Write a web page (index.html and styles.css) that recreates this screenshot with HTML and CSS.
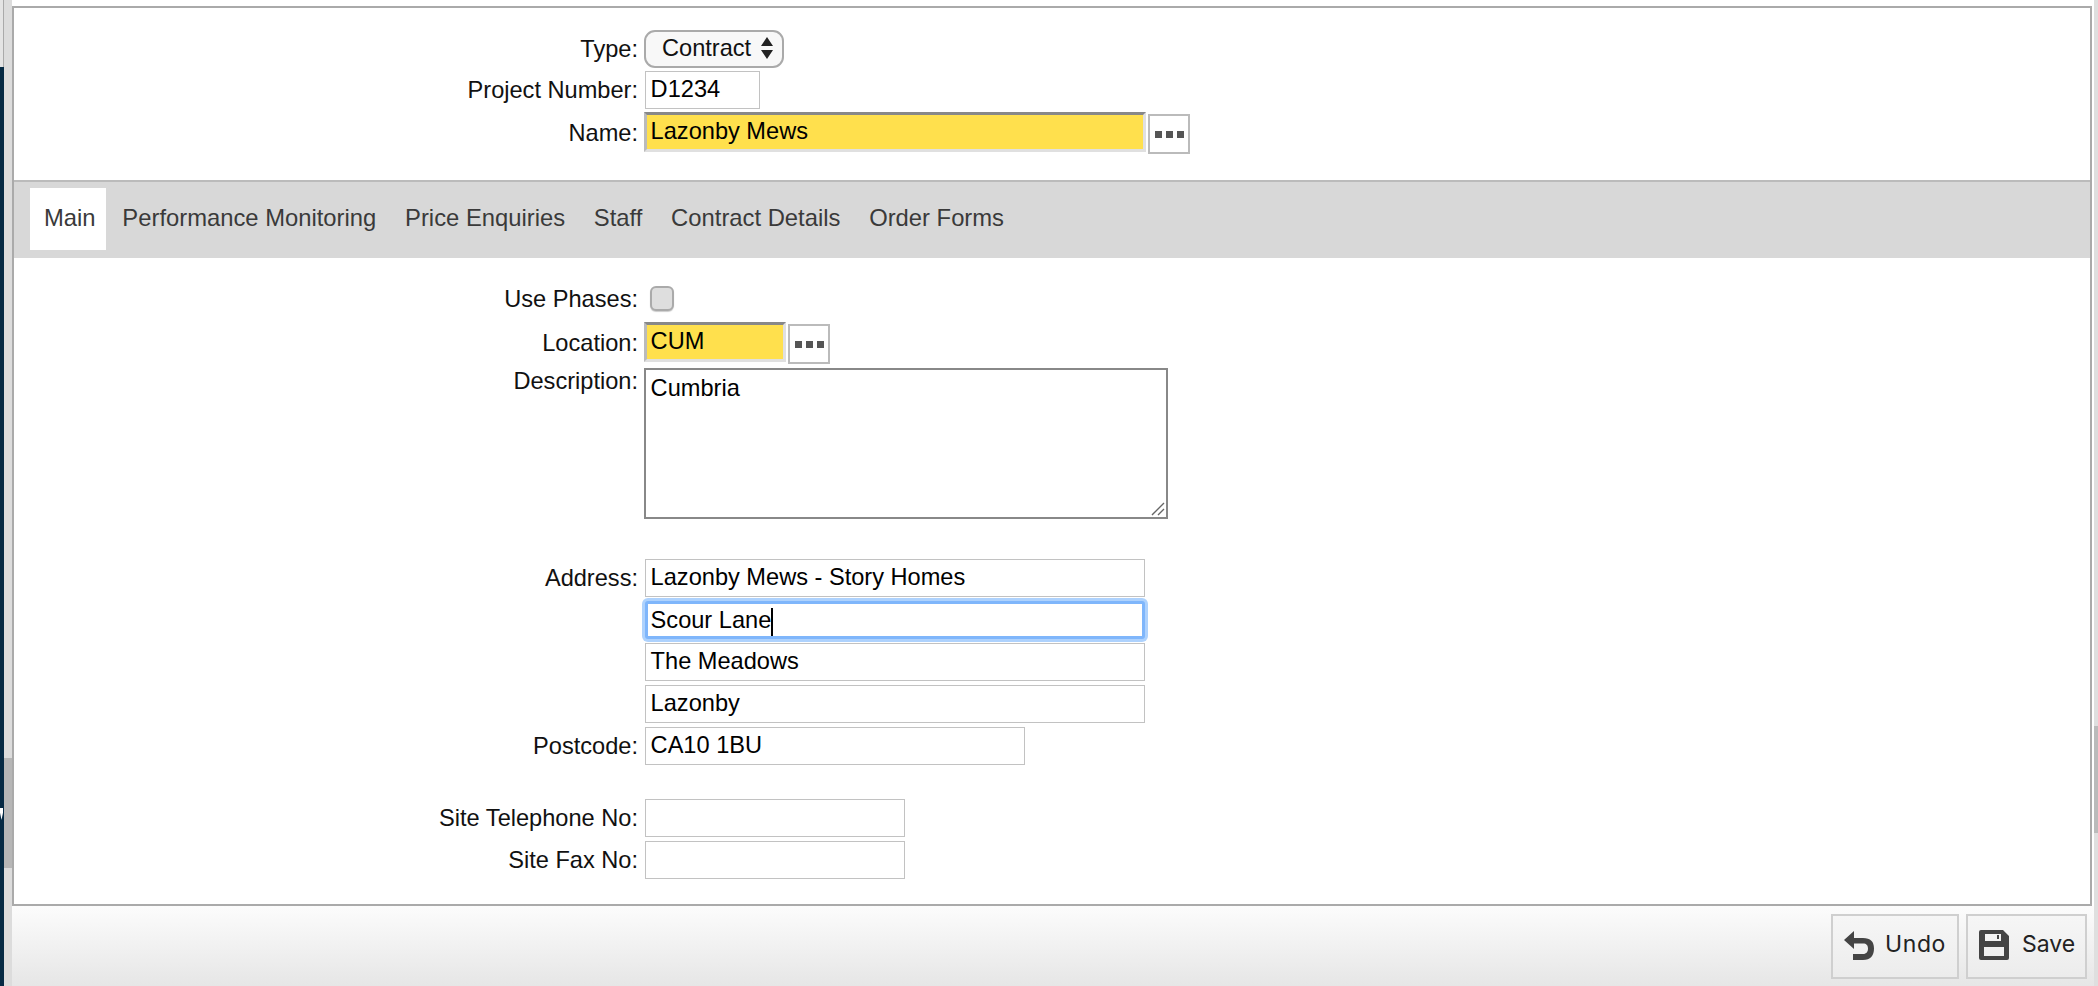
FILE: index.html
```html
<!DOCTYPE html>
<html lang="en">
<head>
<meta charset="utf-8">
<title>Contract</title>
<link rel="stylesheet" href="styles.css">
</head>
<body>
<div class="edge-left">
  <div class="edge-top"></div>
  <div class="edge-navy"><span class="edge-notch"></span></div>
</div>
<div class="gutter"><div class="thumb"></div></div>
<div class="content">
  <main class="panel">
    <form class="form form-head">
      <div class="row"><label class="lab">Type:</label><div class="select"><span>Contract</span><svg class="updown" width="14" height="24" viewBox="0 0 14 24"><path d="M7 1 13 10H1ZM7 23 1 14H13Z" fill="#222"/></svg></div></div>
      <div class="row"><label class="lab">Project Number:</label><div class="input w-115">D1234</div></div>
      <div class="row row-lookup"><label class="lab">Name:</label><div class="input req w-name">Lazonby Mews</div><button type="button" class="dots"><i></i><i></i><i></i></button></div>
    </form>
    <nav class="tabs">
      <a class="tab active">Main</a>
      <a class="tab">Performance Monitoring</a>
      <a class="tab">Price Enquiries</a>
      <a class="tab">Staff</a>
      <a class="tab">Contract Details</a>
      <a class="tab">Order Forms</a>
    </nav>
    <form class="form form-main">
      <div class="row row-check"><label class="lab">Use Phases:</label><span class="check"></span></div>
      <div class="row row-lookup row-loc"><label class="lab">Location:</label><div class="input req w-loc">CUM</div><button type="button" class="dots"><i></i><i></i><i></i></button></div>
      <div class="row row-desc"><label class="lab lab-top">Description:</label><div class="textarea">Cumbria<svg class="grip" width="14" height="14" viewBox="0 0 14 14"><path d="M1 13 13 1M7 13 13 7" stroke="#666" stroke-width="1.4" fill="none"/></svg></div></div>
      <div class="stack stack-addr">
        <div class="row"><label class="lab">Address:</label><div class="input w-500">Lazonby Mews - Story Homes</div></div>
        <div class="row"><span class="lab"></span><div class="input w-500 focus">Scour Lane<span class="caret"></span></div></div>
        <div class="row"><span class="lab"></span><div class="input w-500">The Meadows</div></div>
        <div class="row"><span class="lab"></span><div class="input w-500">Lazonby</div></div>
        <div class="row"><label class="lab">Postcode:</label><div class="input w-380">CA10 1BU</div></div>
      </div>
      <div class="stack stack-tel">
        <div class="row"><label class="lab">Site Telephone No:</label><div class="input w-260"></div></div>
        <div class="row"><label class="lab">Site Fax No:</label><div class="input w-260"></div></div>
      </div>
    </form>
  </main>
  <footer class="foot">
    <button type="button" class="btn btn-undo"><svg width="32" height="32" viewBox="0 0 32 32"><path d="M11 2 1 11 11 20V14.500H20C23.500 14.500 25 16.500 25 19.500S23.500 25 20 25H10V31H20C27.500 31 31 26.500 31 19.500S27.500 9 20 9H11Z" fill="#444"/></svg><span>Undo</span></button>
    <button type="button" class="btn btn-save"><svg width="30" height="30" viewBox="0 0 30 30"><path fill-rule="evenodd" d="M0 2Q0 0 2 0H24L30 6V28Q30 30 28 30H2Q0 30 0 28ZM6 4V11H22V4ZM18 5H20V9H18ZM5 17V26H25V17Z" fill="#444"/></svg><span>Save</span></button>
  </footer>
</div>
<div class="edge-right"><div class="thumb-right"></div></div>
</body>
</html>
```
FILE: styles.css
```css
* { box-sizing: border-box; }
html, body { margin: 0; height: 100%; }
body {
  display: flex;
  width: 2098px;
  height: 986px;
  overflow: hidden;
  background: #fff;
  font-family: "Liberation Sans", Arial, sans-serif;
  color: #111;
}
.edge-left { width: 4px; display: flex; flex-direction: column; }
.edge-top { height: 67px; background: #e4e4e4; border-right: 1px solid #aaa; }
.edge-navy { flex: 1; background: #062a44; position: relative; }
.edge-notch {
  position: absolute; left: 0; top: 741px; width: 3px; height: 12px;
  background: #fff; clip-path: polygon(0 0, 100% 0, 100% 40%, 50% 100%, 0 40%);
}
.gutter { width: 8px; background: #dcdcdc; padding-top: 758px; }
.thumb { height: 110px; background: #b6b6b6; }
.content { width: 2082px; display: flex; flex-direction: column; }
.panel {
  margin-top: 6px;
  height: 900px;
  width: 2080px;
  border: 2px solid #aaa;
  background: #fff;
}
.form-head { padding-top: 22px; padding-bottom: 23px; }
.row { display: flex; align-items: center; height: 38px; margin-bottom: 3px; }
.row-lookup { height: 42px; }
.lab {
  width: 624px;
  margin-right: 6px;
  text-align: right;
  font-size: 23.6px;
  line-height: 38px;
  flex: none;
}
.lab-top { align-self: flex-start; line-height: 26px; }
.row-lookup .lab { line-height: 43px; }
.input {
  height: 38px;
  border: 1px solid #c2c2c2;
  font-size: 23.6px;
  line-height: 34px;
  padding: 0 4.6px;
  background: #fff;
  color: #000;
  margin-left: 1px;
  flex: none;
}
.req {
  height: 40px;
  margin-left: 0;
  align-self: flex-start;
  border: 3px solid #e0e0e0;
  border-top: 3px solid #888;
  border-left-color: #bbb;
  background: #ffe04d;
  line-height: 32px;
  padding: 0 3.6px;
}
.w-115 { width: 115px; }
.w-name { width: 502px; }
.w-loc { width: 142px; }
.w-500 { width: 500px; }
.w-380 { width: 380px; }
.w-260 { width: 260px; }
.select {
  margin: 0;
  width: 140px;
  height: 38px;
  border: 2px solid #aaa;
  border-radius: 11px;
  background: #f8f8f8;
  font-size: 23.6px;
  line-height: 30px;
  display: flex;
  align-items: center;
  padding: 0 0 2px 16px;
  color: #111;
}
.updown { margin-left: 9px; }
.dots {
  width: 42px;
  height: 40px;
  margin: 2px 0 0 2px;
  padding: 0;
  border: 2px solid #bbb;
  background: #fff;
  display: flex;
  align-items: center;
  justify-content: center;
  gap: 4px;
  align-self: flex-start;
}
.dots i { width: 7px; height: 7px; background: #555; display: block; }
.tabs {
  height: 78px;
  border-top: 2px solid #bbb;
  background: #d8d8d8;
  display: flex;
  gap: 0.75px;
  padding: 6px 0 0 16px;
}
.tab {
  height: 62px;
  line-height: 60px;
  padding: 0 14px;
  font-size: 23.800px;
  color: #3a3a3a;
}
.tab.active { background: #fff; padding-right: 10px; margin-right: 2px; }
.form-main { padding-top: 28px; }
.row-check { height: 25px; margin-bottom: 11px; }
.check {
  margin-left: 6px;
  width: 24px;
  height: 25px;
  border: 2px solid #aaa;
  border-radius: 6px;
  background: #dedede;
  box-shadow: 0 1px 1px #ccc;
}
.row-loc { margin-bottom: 4px; }
.row-desc { height: 151px; margin-bottom: 40px; align-items: flex-start; }
.textarea {
  position: relative;
  width: 524px;
  height: 151px;
  border: 2px solid #888;
  font-size: 23.6px;
  padding: 3px 4.6px;
  line-height: 30px;
  color: #000;
}
.grip { position: absolute; right: 1px; bottom: 1px; }
.stack-addr { margin-bottom: 34px; }
.stack .row { margin-bottom: 4px; }
.focus {
  position: relative;
  z-index: 1;
  border: 3px solid #7fb6fb;
  box-shadow: 0 0 0 3px #aed2fd;
  border-radius: 3px;
  line-height: 32px;
  padding: 0 2.6px;
}
.caret {
  display: inline-block;
  width: 2px;
  height: 28px;
  background: #000;
  vertical-align: middle;
}
.foot {
  flex: 1;
  background: linear-gradient(#fcfcfc, #e6e6e6);
  display: flex;
  justify-content: flex-end;
  gap: 7px;
  padding: 8px 7px 7px 0;
}
.btn {
  height: 65px;
  border: 2px solid #cfcfcf;
  background: linear-gradient(#f6f6f6, #ececec);
  display: flex;
  align-items: center;
  font-family: Inter, "Liberation Sans", sans-serif;
  font-size: 23px;
  color: #222;
  padding: 0 0 4px;
}
.btn span { position: relative; top: -1px; }
.btn-undo { width: 128px; padding-left: 10px; gap: 10px; letter-spacing: 0.6px; }
.btn-save { width: 121px; padding-left: 11px; gap: 13px; }
.edge-right { width: 4px; background: #dfdfdf; padding-top: 726px; }
.thumb-right { height: 107px; background: #bbb; }
```
